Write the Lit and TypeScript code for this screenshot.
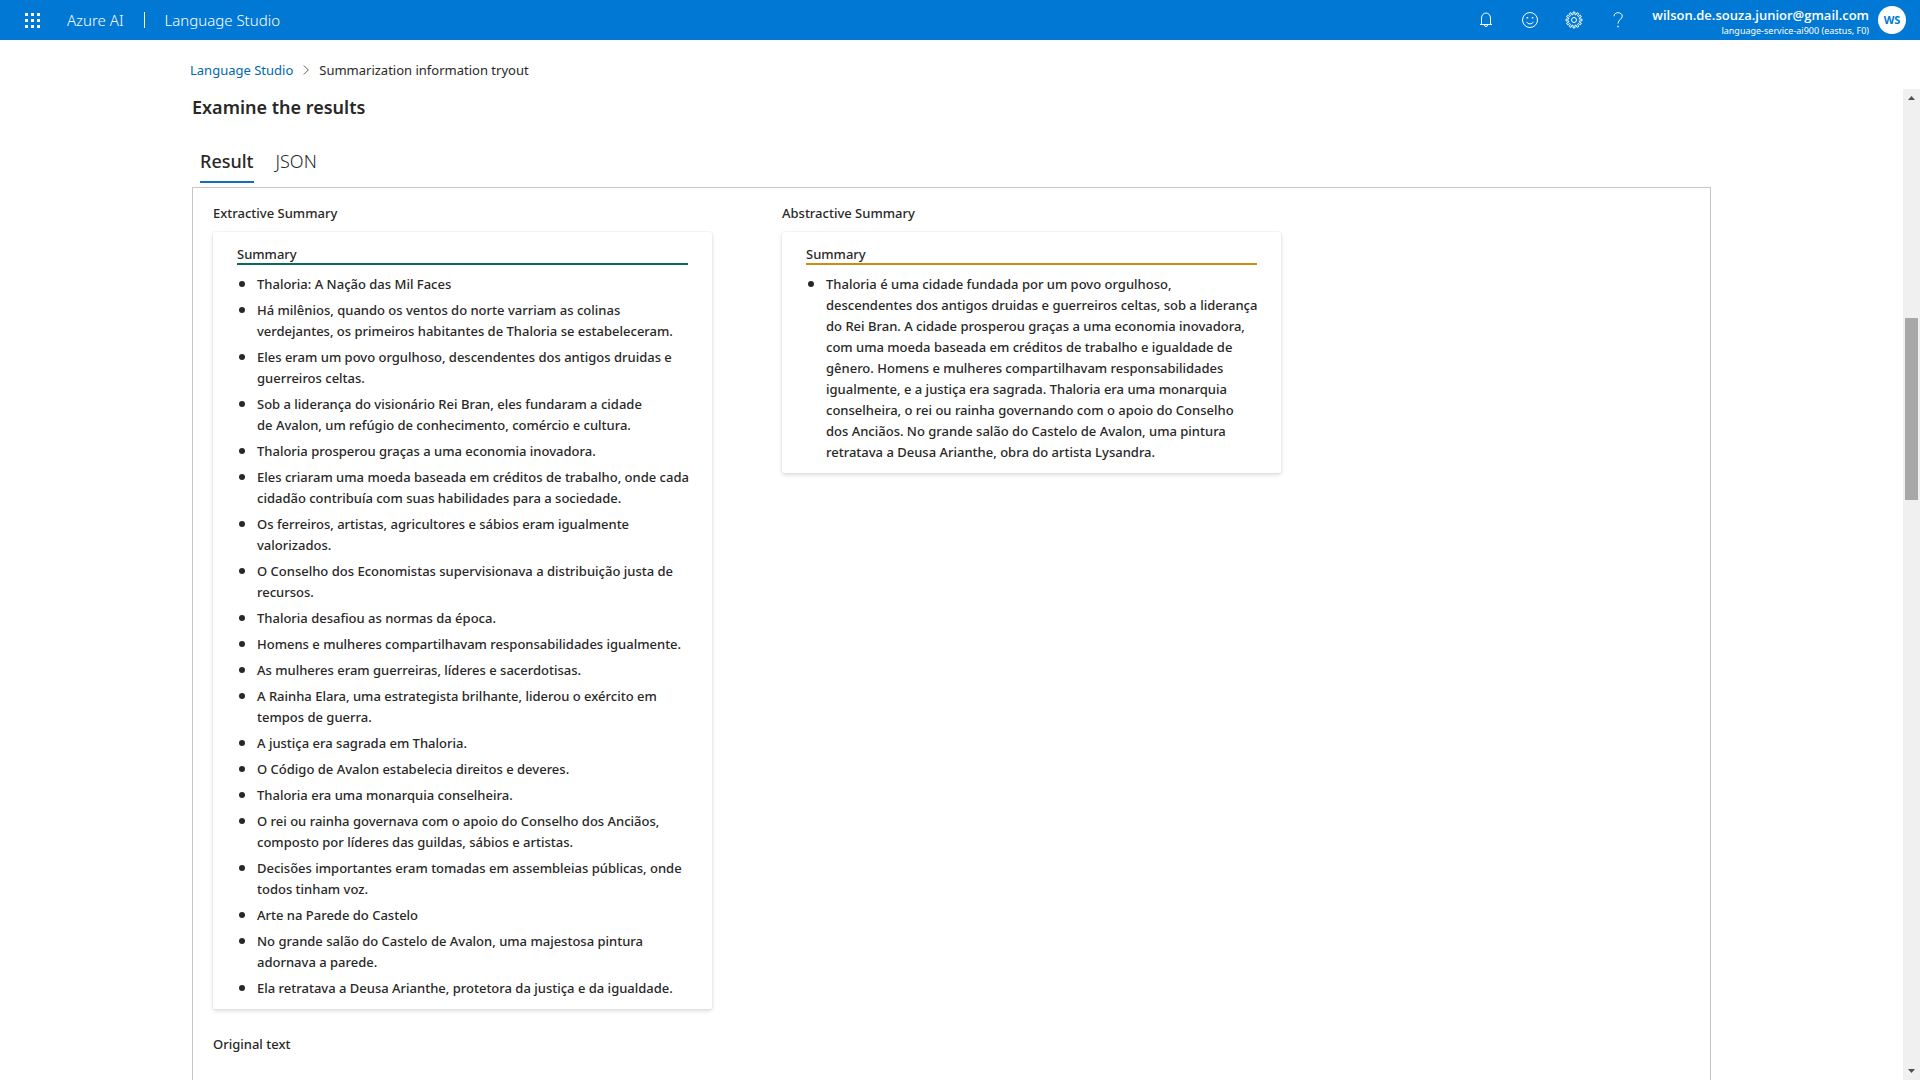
import { LitElement, html, css, svg } from "lit";
import { customElement, property, state } from "lit/decorators.js";

const EXTRACTIVE = [
  "Thaloria: A Nação das Mil Faces",
  "Há milênios, quando os ventos do norte varriam as colinas verdejantes, os primeiros habitantes de Thaloria se estabeleceram.",
  "Eles eram um povo orgulhoso, descendentes dos antigos druidas e guerreiros celtas.",
  "Sob a liderança do visionário Rei Bran, eles fundaram a cidade de\u00a0Avalon, um refúgio de conhecimento, comércio e cultura.",
  "Thaloria prosperou graças a uma economia inovadora.",
  "Eles criaram uma moeda baseada em créditos de trabalho, onde cada cidadão contribuía com suas habilidades para a sociedade.",
  "Os ferreiros, artistas, agricultores e sábios eram igualmente valorizados.",
  "O Conselho dos Economistas supervisionava a distribuição justa de recursos.",
  "Thaloria desafiou as normas da época.",
  "Homens e mulheres compartilhavam responsabilidades igualmente.",
  "As mulheres eram guerreiras, líderes e sacerdotisas.",
  "A Rainha Elara, uma estrategista brilhante, liderou o exército em tempos de guerra.",
  "A justiça era sagrada em Thaloria.",
  "O Código de Avalon estabelecia direitos e deveres.",
  "Thaloria era uma monarquia conselheira.",
  "O rei ou rainha governava com o apoio do Conselho dos Anciãos, composto por líderes das guildas, sábios e artistas.",
  "Decisões importantes eram tomadas em assembleias públicas, onde todos tinham voz.",
  "Arte na Parede do Castelo",
  "No grande salão do Castelo de Avalon, uma majestosa pintura adornava a parede.",
  "Ela retratava a Deusa Arianthe, protetora da justiça e da igualdade.",
];

const ABSTRACTIVE = [
  "Thaloria é uma cidade fundada por um povo orgulhoso,\ndescendentes dos antigos druidas e guerreiros celtas, sob a liderança do Rei Bran. A cidade prosperou graças a uma economia inovadora, com uma moeda baseada em créditos de trabalho e igualdade de gênero. Homens e mulheres compartilhavam responsabilidades igualmente, e a justiça era sagrada. Thaloria era uma monarquia conselheira, o rei ou rainha governando com o apoio do Conselho dos\u00a0Anciãos. No grande salão do Castelo de Avalon, uma pintura retratava a Deusa Arianthe, obra do artista Lysandra.",
];

const gearPath = (() => {
  const teeth = 12;
  const points: string[] = [];
  for (let i = 0; i < teeth; i++) {
    const base = (i * 2 * Math.PI) / teeth;
    for (const [offset, radius] of [[-0.12, 8], [0.12, 8], [0.16, 5.5], [0.36, 5.5]]) {
      const x = 8 + radius * Math.cos(base + offset);
      const y = 8 + radius * Math.sin(base + offset);
      points.push(`${x.toFixed(2)} ${y.toFixed(2)}`);
    }
  }
  return `M${points.join("L")}Z`;
})();

const ICONS = {
  bell: svg`<path d="M3.500 12.500V6a4.500 5 0 0 1 9 0v6.500M2 12.500h12M6.500 13a1.500 1.500 0 0 0 3 0"/>`,
  smile: svg`<circle cx="8" cy="8" r="7.5"/><path d="M4.500 9.800a3.900 3.900 0 0 0 7 0"/><path class="solid" d="M4.600 5h1.600v1.600H4.600zM9.800 5h1.600v1.600H9.800z"/>`,
  gear: svg`<path d=${gearPath}/><circle cx="8" cy="8" r="2.5"/>`,
  help: svg`<path d="M4 4.300C4 2 5.700.7 8 .7s4.300 1.400 4.300 3.400c0 3-4.300 3.700-4.300 7.400"/><path class="solid" d="M7.300 13.800h1.400v1.400H7.300z"/>`,
};

@customElement("summary-card")
class SummaryCard extends LitElement {
  @property() heading = "";
  @property() tone = "green";
  @property({ attribute: false }) sentences: string[] = [];

  static styles = css`
    :host { display: block; }
    .title { margin: 0; font-size: 13px; font-weight: 500; line-height: 21px; }
    .card {
      margin-top: 8px;
      padding: 14px 18px 10px 24px;
      background: #fff;
      border-radius: 2px;
      box-shadow: 0 2px 4px rgba(0, 0, 0, 0.13), 0 0 2px rgba(0, 0, 0, 0.11);
    }
    .label { margin: 0 6px 0 0; font-size: 13px; font-weight: 500; line-height: 17px; border-bottom: 2px solid; }
    .label span { color: #292827; }
    .green { border-color: #0b6a5c; }
    .amber { border-color: #d18b14; }
    ul {
      margin: 9px 0 0;
      padding: 0;
      list-style: none;
      display: flex;
      flex-direction: column;
      gap: 5px;
    }
    li { display: flex; gap: 12px; padding-left: 2px; font-size: 13px; font-weight: 500; line-height: 21px; white-space: pre-line; }
    li::before { content: ""; flex: none; width: 6px; height: 6px; margin-top: 7px; border-radius: 50%; background: #292827; }
  `;

  render() {
    return html`
      <h3 class="title">${this.heading}</h3>
      <div class="card">
        <h4 class="label ${this.tone}"><span>Summary</span></h4>
        <ul>${this.sentences.map((s) => html`<li><span>${s}</span></li>`)}</ul>
      </div>
    `;
  }
}

@customElement("app-root")
class AppRoot extends LitElement {
  @state() private tab = "Result";

  static styles = css`
    :host {
      display: flex;
      flex-direction: column;
      height: 100vh;
      overflow: hidden;
      background: #fff;
      color: #292827;
      font-family: "Noto Sans", "Open Sans", sans-serif;
      font-size: 13px;
    }
    * { box-sizing: border-box; }
    button { border: 0; padding: 0; background: none; color: inherit; font: inherit; cursor: pointer; }
    svg { display: block; }
    a { color: inherit; text-decoration: none; }

    .topbar {
      flex: none;
      display: flex;
      align-items: center;
      height: 40px;
      padding: 0 14px 0 25px;
      background: #0078d4;
      color: #fff;
    }
    .brand { display: flex; align-items: center; margin-left: 27px; font-size: 15px; font-weight: 300; line-height: 40px; }
    .divider { width: 1px; height: 16px; margin: 0 20px; background: #fff; }
    .waffle { fill: #fff; }
    .tools { display: flex; gap: 28px; margin-left: auto; }
    .icon { fill: none; stroke: #fff; stroke-width: 1; }
    .icon .solid { fill: #fff; stroke: none; }
    .account { display: flex; align-items: center; gap: 9px; margin-left: 26px; text-align: right; }
    .who { padding-top: 3px; font-family: "Open Sans", sans-serif; }
    .mail { display: block; font-size: 13px; font-weight: 600; line-height: 17px; }
    .service { display: block; font-family: "Noto Sans", sans-serif; font-size: 9px; line-height: 13px; }
    .avatar {
      width: 28px;
      height: 28px;
      border-radius: 50%;
      background: #fff;
      color: #0078d4;
      font-size: 11px;
      font-weight: 700;
      line-height: 28px;
      text-align: center;
    }

    .crumbs { flex: none; display: flex; align-items: center; height: 49px; padding: 10px 190px 0; line-height: 20px; }
    .crumbs a { color: #0067b0; }
    .chevron { margin: 0 10px; fill: none; stroke: #605e5c; }

    .viewport { flex: 1; min-height: 0; display: flex; }
    .content { flex: 1; min-width: 0; display: flex; flex-direction: column; padding: 0 192px; }
    h2 { margin: 6px 0 0; font-size: 18px; font-weight: 600; line-height: 24px; }
    .tabs { display: flex; gap: 22px; padding: 28px 8px 0; }
    .tab { height: 36px; padding-bottom: 6px; border-bottom: 2px solid transparent; font-size: 18px; font-weight: 300; line-height: 28px; }
    .tab[aria-selected="true"] { font-weight: 500; border-color: #106ebe; }
    .panel { flex: 1; min-height: 0; margin-top: 4px; padding: 15px 20px 0; border: 1px solid #c8c6c4; border-bottom: 0; }
    .columns { display: grid; grid-template-columns: minmax(0, 499px) minmax(0, 499px); gap: 70px; align-items: start; }
    .original { margin: 25px 0 0; font-size: 13px; font-weight: 500; line-height: 21px; }

    .scrollbar { flex: none; width: 17px; display: flex; flex-direction: column; align-items: center; background: #f0f0f0; }
    .arrow { width: 17px; height: 17px; fill: #505050; }
    .track { flex: 1; width: 13px; display: grid; grid-template-rows: 212fr 182fr 563fr; }
    .thumb { grid-row: 2; background: #a8a8a8; }
  `;

  private icon(name: keyof typeof ICONS, label: string) {
    return html`<button type="button" aria-label=${label}>
      <svg class="icon" width="16" height="16" viewBox="0 0 16 16" overflow="visible">${ICONS[name]}</svg>
    </button>`;
  }

  private tabButton(name: string) {
    return html`<button class="tab" type="button" role="tab" aria-selected=${this.tab === name ? "true" : "false"} @click=${() => (this.tab = name)}>${name}</button>`;
  }

  render() {
    const cells = [0, 6, 12];
    return html`
      <header class="topbar">
        <button type="button" aria-label="Apps">
          <svg class="waffle" width="15" height="15" viewBox="0 0 15 15" shape-rendering="crispEdges">
            ${cells.map((y) => cells.map((x) => svg`<rect x=${x} y=${y} width="3" height="3"/>`))}
          </svg>
        </button>
        <div class="brand"><a href="#">Azure AI</a><span class="divider"></span><a href="#">Language Studio</a></div>
        <div class="tools">
          ${this.icon("bell", "Notifications")}
          ${this.icon("smile", "Feedback")}
          ${this.icon("gear", "Settings")}
          ${this.icon("help", "Help")}
        </div>
        <button class="account" type="button">
          <span class="who">
            <span class="mail">wilson.de.souza.junior@gmail.com</span>
            <span class="service">language-service-ai900 (eastus, F0)</span>
          </span>
          <span class="avatar">WS</span>
        </button>
      </header>
      <nav class="crumbs" aria-label="Breadcrumb">
        <a href="#">Language Studio</a>
        <svg class="chevron" width="6" height="10" viewBox="0 0 6 10"><path d="M.8.5 5.300 5 .8 9.500"/></svg>
        <span>Summarization information tryout</span>
      </nav>
      <div class="viewport">
        <main class="content">
          <h2>Examine the results</h2>
          <div class="tabs" role="tablist">${this.tabButton("Result")}${this.tabButton("JSON")}</div>
          <section class="panel" role="tabpanel">
            <div class="columns">
              <summary-card heading="Extractive Summary" tone="green" .sentences=${EXTRACTIVE}></summary-card>
              <summary-card heading="Abstractive Summary" tone="amber" .sentences=${ABSTRACTIVE}></summary-card>
            </div>
            <h3 class="original">Original text</h3>
          </section>
        </main>
        <div class="scrollbar" aria-hidden="true">
          <svg class="arrow" viewBox="0 0 17 17"><path d="M5 11h7L8.500 7z"/></svg>
          <div class="track"><div class="thumb"></div></div>
          <svg class="arrow" viewBox="0 0 17 17"><path d="M5 6h7L8.500 10z"/></svg>
        </div>
      </div>
    `;
  }
}
